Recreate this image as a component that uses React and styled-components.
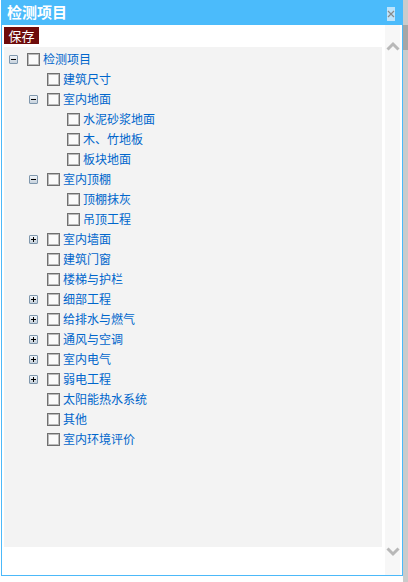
import React from "react";
import styled, { createGlobalStyle } from "styled-components";

const GlobalStyle = createGlobalStyle`
  html, body {
    margin: 0;
    padding: 0;
    background: #ffffff;
    font-family: "Noto Sans CJK SC", "Noto Sans", sans-serif;
  }
`;

const items = [
  { level: 0, toggle: "minus", label: "检测项目" },
  { level: 1, label: "建筑尺寸" },
  { level: 1, toggle: "minus", label: "室内地面" },
  { level: 2, label: "水泥砂浆地面" },
  { level: 2, label: "木、竹地板" },
  { level: 2, label: "板块地面" },
  { level: 1, toggle: "minus", label: "室内顶棚" },
  { level: 2, label: "顶棚抹灰" },
  { level: 2, label: "吊顶工程" },
  { level: 1, toggle: "plus", label: "室内墙面" },
  { level: 1, label: "建筑门窗" },
  { level: 1, label: "楼梯与护栏" },
  { level: 1, toggle: "plus", label: "细部工程" },
  { level: 1, toggle: "plus", label: "给排水与燃气" },
  { level: 1, toggle: "plus", label: "通风与空调" },
  { level: 1, toggle: "plus", label: "室内电气" },
  { level: 1, toggle: "plus", label: "弱电工程" },
  { level: 1, label: "太阳能热水系统" },
  { level: 1, label: "其他" },
  { level: 1, label: "室内环境评价" },
];

function Chevron({ up }) {
  return (
    <svg width="14" height="10" viewBox="0 0 14 10">
      <path
        d={up ? "M1.5 8.5 L7 3 L12.5 8.5" : "M1.5 1.5 L7 7 L12.5 1.5"}
        fill="none"
        stroke="#b8b8b8"
        strokeWidth="3"
      />
    </svg>
  );
}

function Toggle({ kind }) {
  return (
    <ToggleBox>
      <svg width="7" height="7" viewBox="0 0 7 7">
        <rect x="1" y="3" width="5" height="1" fill="#000" />
        {kind === "plus" && <rect x="3" y="1" width="1" height="5" fill="#000" />}
      </svg>
    </ToggleBox>
  );
}

export default function App() {
  return (
    <>
      <GlobalStyle />
      <Page>
        <Top>
          <Window>
            <Header>
              <Title>检测项目</Title>
              <CloseButton>
                <svg width="8" height="8" viewBox="0 0 8 8">
                  <path d="M1 1 L7 7 M7 1 L1 7" stroke="#8a8a8a" strokeWidth="1.2" />
                </svg>
              </CloseButton>
            </Header>
            <Body>
              <Main>
                <Toolbar>
                  <SaveButton>保存</SaveButton>
                </Toolbar>
                <TreePanel>
                  {items.map((it, i) => (
                    <Row key={i} level={it.level}>
                      <ToggleSlot>{it.toggle && <Toggle kind={it.toggle} />}</ToggleSlot>
                      <Check />
                      <Label>{it.label}</Label>
                    </Row>
                  ))}
                </TreePanel>
              </Main>
              <ScrollColumn>
                <Chevron up />
                <Chevron />
              </ScrollColumn>
            </Body>
          </Window>
          <PageStrip>
            <Thumb />
          </PageStrip>
        </Top>
        <BottomShadow />
      </Page>
    </>
  );
}

const Page = styled.div`
  display: flex;
  flex-direction: column;
  width: 408px;
`;

const Top = styled.div`
  display: flex;
`;

const Window = styled.div`
  width: 401px;
  height: 575px;
  margin-left: 1px;
  border: 1px solid #4cb9f9;
  border-top: none;
  background: #ffffff;
  display: flex;
  flex-direction: column;
`;

const Header = styled.div`
  height: 25px;
  margin-left: -1px;
  margin-right: -1px;
  background: #4bbbfb;
  display: flex;
  align-items: center;
  justify-content: space-between;
  padding: 0 8px 0 6px;
`;

const Title = styled.div`
  color: #ffffff;
  font-weight: bold;
  font-size: 15px;
  line-height: 20px;
  margin-top: -2px;
`;

const CloseButton = styled.div`
  width: 8px;
  height: 14px;
  margin-top: 2px;
  background: #bde4fc;
  display: flex;
  align-items: center;
  justify-content: center;
`;

const Body = styled.div`
  flex: 1;
  display: flex;
  padding-right: 2px;
`;

const Main = styled.div`
  flex: 1;
  display: flex;
  flex-direction: column;
`;

const Toolbar = styled.div`
  height: 21px;
  display: flex;
  align-items: center;
  padding-left: 2px;
`;

const SaveButton = styled.div`
  width: 35px;
  height: 17px;
  background: #6e0b0b;
  color: #ffffff;
  font-size: 13px;
  line-height: 17px;
  text-align: center;
`;

const TreePanel = styled.div`
  margin: 1px 0 0 2px;
  width: 378px;
  height: 498px;
  padding-top: 2px;
  background: #f3f3f3;
`;

const Row = styled.div`
  height: 20px;
  display: flex;
  align-items: center;
  padding-left: ${(p) => 5 + p.level * 20}px;
`;

const ToggleSlot = styled.div`
  width: 18px;
  height: 20px;
  display: flex;
  align-items: center;
`;

const ToggleBox = styled.div`
  width: 7px;
  height: 7px;
  border: 1px solid #7f97ad;
  border-radius: 1px;
  background: linear-gradient(#f2f5f8, #c6d1dc);
  display: flex;
`;

const Check = styled.div`
  width: 11px;
  height: 11px;
  border: 1px solid #6f6f6f;
  box-shadow: inset 0 0 0 1px #b9b9b9;
  background: #fafafa;
`;

const Label = styled.span`
  margin-left: 3px;
  color: #0066cc;
  font-size: 12px;
  line-height: 20px;
  white-space: nowrap;
`;

const ScrollColumn = styled.div`
  width: 15px;
  background: #f7f7f7;
  display: flex;
  flex-direction: column;
  align-items: center;
  justify-content: space-between;
  padding: 16px 0 18px;
`;

const PageStrip = styled.div`
  width: 5px;
  height: 576px;
  background: #cbcbcb;
  padding-top: 25px;
`;

const Thumb = styled.div`
  height: 25px;
  background: #a6a6a6;
`;

const BottomShadow = styled.div`
  margin-left: 5px;
  height: 6px;
  background: #cbcbcb;
`;
